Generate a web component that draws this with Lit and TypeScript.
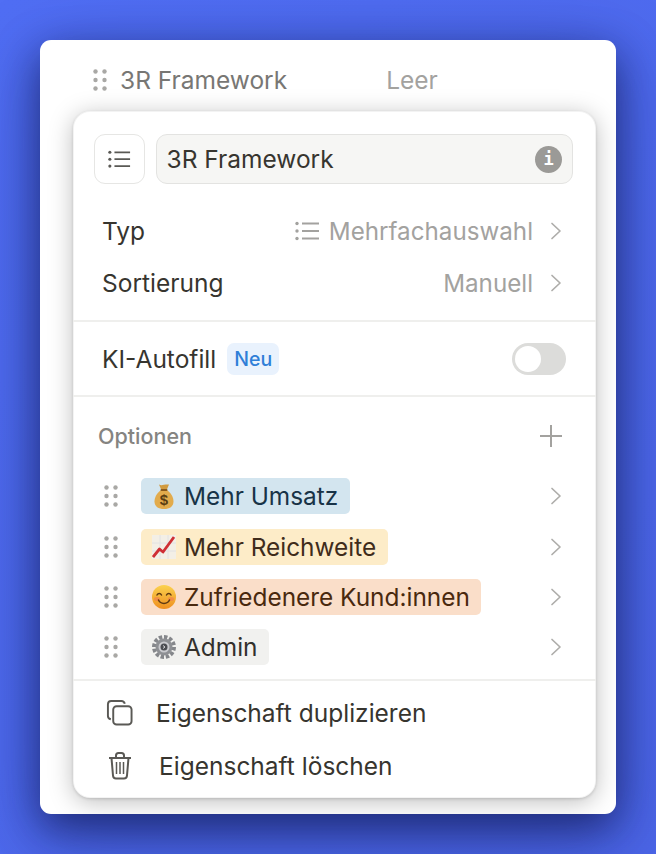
import { LitElement, html, css, svg } from "lit";
import { customElement } from "lit/decorators.js";

const dots = html`<svg class="grip" width="14" height="22" viewBox="0 0 14 22">
  ${[2.5, 11, 19.5].flatMap((y) => [2.5, 11.5].map((x) => svg`<circle cx=${x} cy=${y} r="2.2" fill="#a9a8a5" />`))}
</svg>`;

const chevron = html`<svg class="chev" width="12" height="18" viewBox="0 0 12 18" fill="none" stroke="#aeadaa" stroke-width="1.7" stroke-linecap="round" stroke-linejoin="round">
  <path d="M2 1.5 10 9l-8 7.5" />
</svg>`;

const listIcon = (w: number, color: string) => html`<svg width=${w} height=${w * 0.8} viewBox="0 0 25 20" fill="none" stroke=${color} stroke-width="2">
  <path d="M7 2.5h17M7 10h17M7 17.5h17" />
  <g fill=${color} stroke="none"><circle cx="2" cy="2.5" r="1.7" /><circle cx="2" cy="10" r="1.7" /><circle cx="2" cy="17.5" r="1.7" /></g>
</svg>`;

const bag = html`<svg class="emoji" width="24" height="27" viewBox="0 0 24 27">
  <path d="M7 1.500c2 1.200 3 .8 5 .3 2-.5 3.500-.5 5-.3l-2.500 6h-5z" fill="#d19a3e" />
  <path d="M9 7C5 10 2.500 14 2.500 18.500c0 5 4 7.500 9.500 7.500s9.500-2.500 9.500-7.500C21.500 14 19 10 15 7z" fill="#e2ab4c" />
  <rect x="8.500" y="6" width="7" height="2" rx="1" fill="#8a5a1c" />
  <text x="12" y="22" text-anchor="middle" font-family="Liberation Sans" font-size="15" font-weight="700" fill="#5a3d12">$</text>
</svg>`;

const chart = html`<svg class="emoji" width="24" height="26" viewBox="0 0 24 26">
  <rect x="0" y="1" width="24" height="24" fill="#f3efe6" />
  <path d="M8 1v24M16 1v24M0 9h24M0 17h24" stroke="#e2e2e2" stroke-width="1" />
  <path d="M1 23 7.500 15l3.500 3L22 3" fill="none" stroke="#cf2f35" stroke-width="2.800" stroke-linejoin="round" />
</svg>`;

const smile = html`<svg class="emoji" width="24" height="24" viewBox="0 0 24 24">
  <defs><linearGradient id="sm" x1="0" y1="0" x2="0" y2="1"><stop offset="0" stop-color="#fbd24f" /><stop offset="1" stop-color="#ee8f1f" /></linearGradient></defs>
  <circle cx="12" cy="12" r="12" fill="url(#sm)" />
  <ellipse cx="5" cy="14" rx="3" ry="2" fill="#f27a52" opacity=".6" />
  <ellipse cx="19" cy="14" rx="3" ry="2" fill="#f27a52" opacity=".6" />
  <path d="M5 10c1-2 3.500-2 4.500 0M14.500 10c1-2 3.500-2 4.500 0M6.500 15c2 4.500 9 4.500 11 0" fill="none" stroke="#5f3a12" stroke-width="1.500" stroke-linecap="round" />
</svg>`;

const gear = html`<svg class="emoji" width="24" height="24" viewBox="0 0 24 24">
  <circle cx="12" cy="12" r="10" fill="none" stroke="#85878b" stroke-width="4" stroke-dasharray="3.400 1.800" />
  <circle cx="12" cy="12" r="8.500" fill="#8e9094" />
  <circle cx="12" cy="12" r="5.500" fill="#c9cace" />
  <circle cx="12" cy="12" r="3.500" fill="#4b4d52" />
  <path d="M11 10.500 13 12l-2 1.500" fill="none" stroke="#e4e4e6" stroke-width=".9" />
</svg>`;

const options = [
  { label: "Mehr Umsatz", icon: bag, cls: "blue" },
  { label: "Mehr Reichweite", icon: chart, cls: "yellow" },
  { label: "Zufriedenere Kund:innen", icon: smile, cls: "orange" },
  { label: "Admin", icon: gear, cls: "gray" },
];

@customElement("app-root")
export class AppRoot extends LitElement {
  static styles = css`
    :host {
      display: block;
      height: 854px;
      overflow: hidden;
      background: linear-gradient(135deg, #506ef4 0%, #4c66e8 100%);
      font-family: Inter, "Liberation Sans", sans-serif;
      color: #37352f;
      font-size: 24.5px;
    }
    .page {
      padding: 40px 40px 0;
    }
    .card {
      height: 774px;
      box-sizing: border-box;
      background: #fff;
      border-radius: 11px;
      box-shadow: 0 14px 40px rgba(10, 16, 70, 0.6), 0 20px 80px rgba(10, 16, 70, 0.3);
      padding: 0 20px 16px 33px;
      display: flex;
      flex-direction: column;
      overflow: hidden;
    }
    .head {
      height: 71px;
      box-sizing: border-box;
      flex: none;
      display: flex;
      align-items: center;
      padding: 9px 0 0 20px;
      color: #787774;
    }
    .head .grip { margin-right: 13px; }
    .head .leer { margin-left: 99px; color: #a3a29f; }
    .panel {
      flex: 1;
      background: #fff;
      border-radius: 17px;
      box-shadow: inset 0 0 0 1px rgba(15, 15, 15, 0.05), 0 1px 3px rgba(0, 0, 0, 0.14), 0 4px 24px rgba(0, 0, 0, 0.26);
      display: flex;
      flex-direction: column;
    }
    .top {
      display: flex;
      gap: 11px;
      padding: 23px 23px 0 21px;
    }
    .icon-btn {
      width: 51px;
      height: 50px;
      flex: none;
      box-sizing: border-box;
      border: 1px solid #e6e6e4;
      border-radius: 11px;
      display: flex;
      align-items: center;
      justify-content: center;
    }
    .input {
      flex: 1;
      height: 50px;
      box-sizing: border-box;
      background: #f6f6f4;
      border: 1.5px solid #e3e3e1;
      border-radius: 11px;
      display: flex;
      align-items: center;
      justify-content: space-between;
      padding: 0 10px 0 9.500px;
    }
    .info {
      width: 27px;
      height: 27px;
      border-radius: 50%;
      background: #9b9a97;
      color: #fff;
      font: 700 17px "DejaVu Sans Mono", monospace;
      display: flex;
      align-items: center;
      justify-content: center;
    }
    .rows {
      padding: 21px 34px 11px 29px;
    }
    .row {
      height: 52px;
      display: flex;
      align-items: center;
      justify-content: space-between;
    }
    .value {
      display: flex;
      align-items: center;
      color: #a3a29f;
      font-size: 24.200px;
    }
    .value svg:first-child:not(.chev) { margin-right: 9px; }
    .value .chev { margin-left: 17px; }
    .sep {
      height: 2px;
      flex: none;
      background: #efefed;
    }
    .ai {
      height: 73px;
      display: flex;
      align-items: center;
      padding: 1px 30px 0 29px;
      box-sizing: border-box;
    }
    .badge {
      margin-left: 11px;
      height: 32px;
      padding: 0 7px;
      display: flex;
      align-items: center;
      border-radius: 7px;
      background: #e9f2fd;
      color: #2f7fd8;
      font-size: 19.500px;
      font-weight: 500;
    }
    .toggle {
      margin-left: auto;
      width: 54px;
      height: 32px;
      box-sizing: border-box;
      padding: 3px;
      border-radius: 16px;
      background: #dcdcda;
    }
    .toggle span {
      display: block;
      width: 26px;
      height: 26px;
      border-radius: 50%;
      background: #fff;
    }
    .options {
      height: 74px;
      display: flex;
      align-items: center;
      justify-content: space-between;
      padding: 4px 34px 0 25px;
      box-sizing: border-box;
      color: #858481;
      font-size: 21.500px;
      font-weight: 500;
      flex: none;
    }
    .list {
      padding: 0 34px 0 31px;
      height: 208px;
      flex: none;
      font-size: 24.400px;
    }
    .opt {
      height: 50.400px;
      display: flex;
      align-items: center;
    }
    .opt .grip { margin-right: 23px; }
    .opt .chev { margin-left: auto; }
    .tag {
      height: 36px;
      display: flex;
      align-items: center;
      gap: 8px;
      padding: 0 11.500px 0 11px;
      border-radius: 5px;
    }
    .blue { background: #d3e5ef; color: #183347; }
    .yellow { background: #fdecc8; color: #402c1b; }
    .orange { background: #fadec9; color: #49290e; }
    .gray { background: #f1f1ef; color: #32302c; }
    .emoji { flex: none; }
    .actions {
      padding: 5px 0 0 33px;
    }
    .action {
      height: 53px;
      display: flex;
      align-items: center;
    }
    .action svg { flex: none; }
    .copy { margin-right: 23px; }
    .trash { margin: 0 27px 0 2px; }
  `;

  render() {
    return html`<div class="page">
      <div class="card">
        <div class="head">${dots}<span>3R Framework</span><span class="leer">Leer</span></div>
        <div class="panel">
          <div class="top">
            <div class="icon-btn">${listIcon(23, "#5a5955")}</div>
            <div class="input"><span>3R Framework</span><span class="info">i</span></div>
          </div>
          <div class="rows">
            <div class="row">
              <span>Typ</span>
              <span class="value">${listIcon(25, "#a3a29f")}Mehrfachauswahl${chevron}</span>
            </div>
            <div class="row">
              <span>Sortierung</span>
              <span class="value">Manuell${chevron}</span>
            </div>
          </div>
          <div class="sep"></div>
          <div class="ai">
            <span>KI-Autofill</span>
            <span class="badge">Neu</span>
            <span class="toggle"><span></span></span>
          </div>
          <div class="sep"></div>
          <div class="options">
            <span>Optionen</span>
            <svg width="22" height="22" viewBox="0 0 22 22" stroke="#a3a29f" stroke-width="2"><path d="M11 0v22M0 11h22" /></svg>
          </div>
          <div class="list">
            ${options.map(
              (o) => html`<div class="opt">
                ${dots}
                <span class="tag ${o.cls}">${o.icon}<span>${o.label}</span></span>
                ${chevron}
              </div>`
            )}
          </div>
          <div class="sep"></div>
          <div class="actions">
            <div class="action">
              <svg class="copy" width="27" height="27" viewBox="0 0 28 27" fill="none" stroke="#5a5955" stroke-width="2">
                <rect x="7.500" y="7" width="19" height="19" rx="3.500" />
                <path d="M5 20.500C3 20 2 18.500 2 17V5c0-2 1.500-3.500 3.500-3.500H16c1.500 0 3 1 3.500 3" />
              </svg>
              <span>Eigenschaft duplizieren</span>
            </div>
            <div class="action">
              <svg class="trash" width="24" height="28" viewBox="0 0 24 28" fill="none" stroke="#5a5955" stroke-width="2">
                <path d="M1 6h22M8 6V3.500C8 2 9 1 10.500 1h3C15 1 16 2 16 3.500V6" />
                <path d="M3.500 6l1.500 17.500c.1 1.800 1.200 3 3 3h8c1.800 0 2.900-1.200 3-3L20.500 6" />
                <path d="M8.500 10v12M12 10v12M15.500 10v12" stroke-width="1.500" />
              </svg>
              <span>Eigenschaft löschen</span>
            </div>
          </div>
        </div>
      </div>
    </div>`;
  }
}
